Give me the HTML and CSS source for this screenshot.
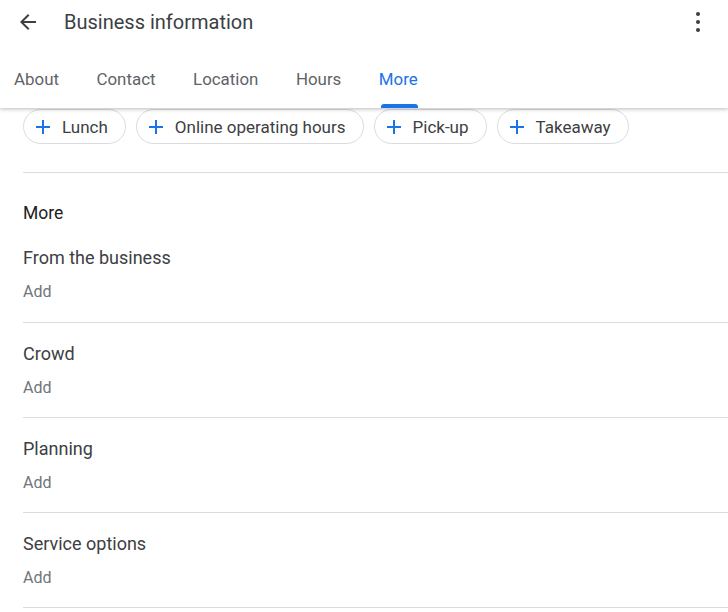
FILE: index.html
```html
<!DOCTYPE html>
<html lang="en">
<head>
  <meta charset="UTF-8">
  <title>Business information</title>
  <link rel="stylesheet" href="styles.css">
</head>
<body>
  <div class="header">
    <div class="topbar">
      <button class="icon-btn back">
        <svg width="24" height="24" viewBox="0 0 24 24"><path d="M20 11H7.83l5.59-5.59L12 4l-8 8 8 8 1.41-1.41L7.83 13H20v-2z" fill="#3c4043"/></svg>
      </button>
      <div class="title">Business information</div>
      <button class="icon-btn menu">
        <svg width="24" height="24" viewBox="0 0 24 24"><circle cx="12" cy="4" r="2" fill="#3c4043"/><circle cx="12" cy="12" r="2" fill="#3c4043"/><circle cx="12" cy="20" r="2" fill="#3c4043"/></svg>
      </button>
    </div>
    <div class="tabs">
      <div class="tab">About</div>
      <div class="tab">Contact</div>
      <div class="tab">Location</div>
      <div class="tab">Hours</div>
      <div class="tab active">More</div>
    </div>
  </div>

  <div class="content">
    <div class="chips">
      <div class="chip"><span class="plus"></span>Lunch</div>
      <div class="chip"><span class="plus"></span>Online operating hours</div>
      <div class="chip"><span class="plus"></span>Pick-up</div>
      <div class="chip"><span class="plus"></span>Takeaway</div>
    </div>

    <div class="group">
      <h2 class="group-title">More</h2>
      <div class="section first">
        <div class="section-title">From the business</div>
        <div class="section-add">Add</div>
      </div>
      <div class="section">
        <div class="section-title">Crowd</div>
        <div class="section-add">Add</div>
      </div>
      <div class="section">
        <div class="section-title">Planning</div>
        <div class="section-add">Add</div>
      </div>
      <div class="section">
        <div class="section-title">Service options</div>
        <div class="section-add">Add</div>
      </div>
    </div>
  </div>
</body>
</html>
```

FILE: styles.css
```css
* {
  box-sizing: border-box;
}
body {
  margin: 0;
  padding: 0;
  font-family: Roboto, "Liberation Sans", Arial, sans-serif;
  background: #fff;
  color: #3c4043;
  height: 612px;
  overflow: hidden;
}
.header {
  position: relative;
  z-index: 2;
  background: #fff;
  height: 108px;
  box-shadow: 0 1px 4px rgba(0,0,0,0.28);
}
.topbar {
  display: flex;
  align-items: center;
  height: 44px;
}
.icon-btn {
  background: none;
  border: none;
  padding: 0;
  width: 24px;
  height: 24px;
  display: flex;
  cursor: pointer;
}
.back {
  margin-left: 16px;
  margin-right: 24px;
}
.menu {
  margin-left: auto;
  margin-right: 18px;
}
.title {
  font-size: 20px;
  line-height: 44px;
  color: #3c4043;
}
.tabs {
  display: flex;
  gap: 37.5px;
  padding-left: 14px;
  height: 64px;
}
.tab {
  position: relative;
  font-size: 16.9px;
  line-height: 20px;
  padding-top: 25px;
  color: #5f6368;
}
.tab.active {
  color: #1a73e8;
}
.tab.active::after {
  content: "";
  position: absolute;
  left: 2px;
  right: 0;
  bottom: 0;
  height: 4px;
  background: #1a73e8;
  border-radius: 3px 3px 0 0;
}
.content {
  padding-left: 23px;
}
.chips {
  display: flex;
  gap: 10px;
  margin-top: 1px;
  padding-bottom: 28px;
  border-bottom: 1px solid #dadce0;
}
.chip {
  display: flex;
  align-items: center;
  height: 35px;
  padding: 0 17px 0 12px;
  border: 1px solid #dadce0;
  border-radius: 18px;
  font-size: 17px;
  color: #3c4043;
}
.plus {
  position: relative;
  width: 14px;
  height: 14px;
  margin-right: 12px;
}
.plus::before,
.plus::after {
  content: "";
  position: absolute;
  background: #1a73e8;
}
.plus::before {
  left: 0;
  right: 0;
  top: 6px;
  height: 2px;
}
.plus::after {
  top: 0;
  bottom: 0;
  left: 6px;
  width: 2px;
}
.group-title {
  margin: 28px 0 0;
  font-size: 17.5px;
  font-weight: 400;
  line-height: 24px;
  color: #202124;
}
.section {
  padding: 19px 0 19px;
  border-bottom: 1px solid #dadce0;
}
.section.first {
  padding-top: 21px;
  padding-bottom: 20px;
}
.section-title {
  font-size: 18px;
  line-height: 24px;
  color: #3c4043;
}
.section-add {
  margin-top: 12px;
  font-size: 16px;
  line-height: 20px;
  color: #70757a;
}
```
